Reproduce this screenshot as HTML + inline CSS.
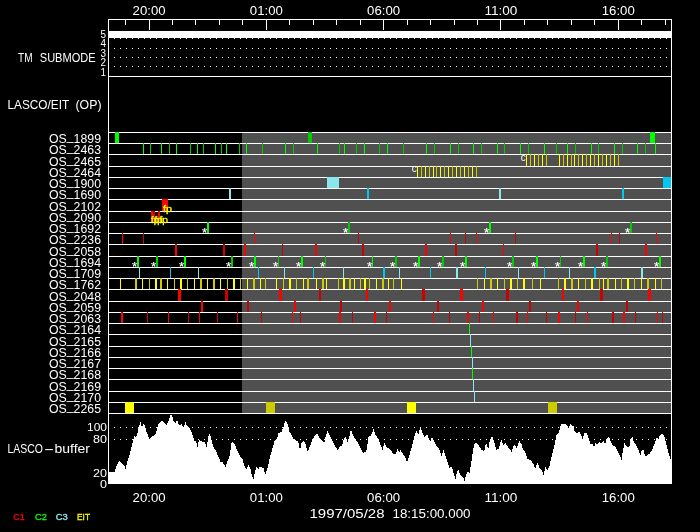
<!DOCTYPE html>
<html><head><meta charset="utf-8"><title>LASCO/EIT plan 1997/05/28</title>
<style>
html,body{margin:0;padding:0;background:#000;}
body{width:700px;height:532px;overflow:hidden;}
svg{display:block;position:absolute;left:0;top:0;}
svg.t{will-change:transform;}
text{font-family:"Liberation Sans", sans-serif;stroke-width:0px;}
</style></head><body>
<svg width="700" height="532" viewBox="0 0 700 532">
<rect x="0" y="0" width="700" height="532" fill="#000"/>
<g shape-rendering="crispEdges">
<rect x="242" y="132" width="429" height="281" fill="#505050"/>
<rect x="108" y="19" width="564" height="1" fill="#fff"/>
<rect x="108" y="19" width="1" height="465" fill="#fff"/>
<rect x="671" y="19" width="1" height="465" fill="#fff"/>
<rect x="125" y="19" width="1" height="6" fill="#fff"/>
<rect x="149" y="19" width="1" height="11" fill="#fff"/>
<rect x="172" y="19" width="1" height="6" fill="#fff"/>
<rect x="195" y="19" width="1" height="6" fill="#fff"/>
<rect x="219" y="19" width="1" height="6" fill="#fff"/>
<rect x="242" y="19" width="1" height="6" fill="#fff"/>
<rect x="266" y="19" width="1" height="11" fill="#fff"/>
<rect x="289" y="19" width="1" height="6" fill="#fff"/>
<rect x="313" y="19" width="1" height="6" fill="#fff"/>
<rect x="336" y="19" width="1" height="6" fill="#fff"/>
<rect x="360" y="19" width="1" height="6" fill="#fff"/>
<rect x="383" y="19" width="1" height="11" fill="#fff"/>
<rect x="407" y="19" width="1" height="6" fill="#fff"/>
<rect x="430" y="19" width="1" height="6" fill="#fff"/>
<rect x="454" y="19" width="1" height="6" fill="#fff"/>
<rect x="477" y="19" width="1" height="6" fill="#fff"/>
<rect x="500" y="19" width="1" height="11" fill="#fff"/>
<rect x="524" y="19" width="1" height="6" fill="#fff"/>
<rect x="547" y="19" width="1" height="6" fill="#fff"/>
<rect x="571" y="19" width="1" height="6" fill="#fff"/>
<rect x="594" y="19" width="1" height="6" fill="#fff"/>
<rect x="618" y="19" width="1" height="11" fill="#fff"/>
<rect x="641" y="19" width="1" height="6" fill="#fff"/>
<rect x="665" y="19" width="1" height="6" fill="#fff"/>
<rect x="108" y="31" width="563" height="7" fill="#fff"/>
<g fill="#fff"><rect x="114" y="38" width="1" height="1"/><rect x="120" y="38" width="1" height="1"/><rect x="126" y="38" width="1" height="1"/><rect x="132" y="38" width="1" height="1"/><rect x="138" y="38" width="1" height="1"/><rect x="144" y="38" width="1" height="1"/><rect x="150" y="38" width="1" height="1"/><rect x="156" y="38" width="1" height="1"/><rect x="162" y="38" width="1" height="1"/><rect x="168" y="38" width="1" height="1"/><rect x="174" y="38" width="1" height="1"/><rect x="180" y="38" width="1" height="1"/><rect x="186" y="38" width="1" height="1"/><rect x="192" y="38" width="1" height="1"/><rect x="198" y="38" width="1" height="1"/><rect x="204" y="38" width="1" height="1"/><rect x="210" y="38" width="1" height="1"/><rect x="216" y="38" width="1" height="1"/><rect x="222" y="38" width="1" height="1"/><rect x="228" y="38" width="1" height="1"/><rect x="234" y="38" width="1" height="1"/><rect x="240" y="38" width="1" height="1"/><rect x="246" y="38" width="1" height="1"/><rect x="252" y="38" width="1" height="1"/><rect x="258" y="38" width="1" height="1"/><rect x="264" y="38" width="1" height="1"/><rect x="270" y="38" width="1" height="1"/><rect x="276" y="38" width="1" height="1"/><rect x="282" y="38" width="1" height="1"/><rect x="288" y="38" width="1" height="1"/><rect x="294" y="38" width="1" height="1"/><rect x="300" y="38" width="1" height="1"/><rect x="306" y="38" width="1" height="1"/><rect x="312" y="38" width="1" height="1"/><rect x="318" y="38" width="1" height="1"/><rect x="324" y="38" width="1" height="1"/><rect x="330" y="38" width="1" height="1"/><rect x="336" y="38" width="1" height="1"/><rect x="342" y="38" width="1" height="1"/><rect x="348" y="38" width="1" height="1"/><rect x="354" y="38" width="1" height="1"/><rect x="360" y="38" width="1" height="1"/><rect x="366" y="38" width="1" height="1"/><rect x="372" y="38" width="1" height="1"/><rect x="378" y="38" width="1" height="1"/><rect x="384" y="38" width="1" height="1"/><rect x="390" y="38" width="1" height="1"/><rect x="396" y="38" width="1" height="1"/><rect x="402" y="38" width="1" height="1"/><rect x="408" y="38" width="1" height="1"/><rect x="414" y="38" width="1" height="1"/><rect x="420" y="38" width="1" height="1"/><rect x="426" y="38" width="1" height="1"/><rect x="432" y="38" width="1" height="1"/><rect x="438" y="38" width="1" height="1"/><rect x="444" y="38" width="1" height="1"/><rect x="450" y="38" width="1" height="1"/><rect x="456" y="38" width="1" height="1"/><rect x="462" y="38" width="1" height="1"/><rect x="468" y="38" width="1" height="1"/><rect x="474" y="38" width="1" height="1"/><rect x="480" y="38" width="1" height="1"/><rect x="486" y="38" width="1" height="1"/><rect x="492" y="38" width="1" height="1"/><rect x="498" y="38" width="1" height="1"/><rect x="504" y="38" width="1" height="1"/><rect x="510" y="38" width="1" height="1"/><rect x="516" y="38" width="1" height="1"/><rect x="522" y="38" width="1" height="1"/><rect x="528" y="38" width="1" height="1"/><rect x="534" y="38" width="1" height="1"/><rect x="540" y="38" width="1" height="1"/><rect x="546" y="38" width="1" height="1"/><rect x="552" y="38" width="1" height="1"/><rect x="558" y="38" width="1" height="1"/><rect x="564" y="38" width="1" height="1"/><rect x="570" y="38" width="1" height="1"/><rect x="576" y="38" width="1" height="1"/><rect x="582" y="38" width="1" height="1"/><rect x="588" y="38" width="1" height="1"/><rect x="594" y="38" width="1" height="1"/><rect x="600" y="38" width="1" height="1"/><rect x="606" y="38" width="1" height="1"/><rect x="612" y="38" width="1" height="1"/><rect x="618" y="38" width="1" height="1"/><rect x="624" y="38" width="1" height="1"/><rect x="630" y="38" width="1" height="1"/><rect x="636" y="38" width="1" height="1"/><rect x="642" y="38" width="1" height="1"/><rect x="648" y="38" width="1" height="1"/><rect x="654" y="38" width="1" height="1"/><rect x="660" y="38" width="1" height="1"/><rect x="666" y="38" width="1" height="1"/></g>
<g fill="#fff"><rect x="114" y="48" width="1" height="1"/><rect x="120" y="48" width="1" height="1"/><rect x="126" y="48" width="1" height="1"/><rect x="132" y="48" width="1" height="1"/><rect x="138" y="48" width="1" height="1"/><rect x="144" y="48" width="1" height="1"/><rect x="150" y="48" width="1" height="1"/><rect x="156" y="48" width="1" height="1"/><rect x="162" y="48" width="1" height="1"/><rect x="168" y="48" width="1" height="1"/><rect x="174" y="48" width="1" height="1"/><rect x="180" y="48" width="1" height="1"/><rect x="186" y="48" width="1" height="1"/><rect x="192" y="48" width="1" height="1"/><rect x="198" y="48" width="1" height="1"/><rect x="204" y="48" width="1" height="1"/><rect x="210" y="48" width="1" height="1"/><rect x="216" y="48" width="1" height="1"/><rect x="222" y="48" width="1" height="1"/><rect x="228" y="48" width="1" height="1"/><rect x="234" y="48" width="1" height="1"/><rect x="240" y="48" width="1" height="1"/><rect x="246" y="48" width="1" height="1"/><rect x="252" y="48" width="1" height="1"/><rect x="258" y="48" width="1" height="1"/><rect x="264" y="48" width="1" height="1"/><rect x="270" y="48" width="1" height="1"/><rect x="276" y="48" width="1" height="1"/><rect x="282" y="48" width="1" height="1"/><rect x="288" y="48" width="1" height="1"/><rect x="294" y="48" width="1" height="1"/><rect x="300" y="48" width="1" height="1"/><rect x="306" y="48" width="1" height="1"/><rect x="312" y="48" width="1" height="1"/><rect x="318" y="48" width="1" height="1"/><rect x="324" y="48" width="1" height="1"/><rect x="330" y="48" width="1" height="1"/><rect x="336" y="48" width="1" height="1"/><rect x="342" y="48" width="1" height="1"/><rect x="348" y="48" width="1" height="1"/><rect x="354" y="48" width="1" height="1"/><rect x="360" y="48" width="1" height="1"/><rect x="366" y="48" width="1" height="1"/><rect x="372" y="48" width="1" height="1"/><rect x="378" y="48" width="1" height="1"/><rect x="384" y="48" width="1" height="1"/><rect x="390" y="48" width="1" height="1"/><rect x="396" y="48" width="1" height="1"/><rect x="402" y="48" width="1" height="1"/><rect x="408" y="48" width="1" height="1"/><rect x="414" y="48" width="1" height="1"/><rect x="420" y="48" width="1" height="1"/><rect x="426" y="48" width="1" height="1"/><rect x="432" y="48" width="1" height="1"/><rect x="438" y="48" width="1" height="1"/><rect x="444" y="48" width="1" height="1"/><rect x="450" y="48" width="1" height="1"/><rect x="456" y="48" width="1" height="1"/><rect x="462" y="48" width="1" height="1"/><rect x="468" y="48" width="1" height="1"/><rect x="474" y="48" width="1" height="1"/><rect x="480" y="48" width="1" height="1"/><rect x="486" y="48" width="1" height="1"/><rect x="492" y="48" width="1" height="1"/><rect x="498" y="48" width="1" height="1"/><rect x="504" y="48" width="1" height="1"/><rect x="510" y="48" width="1" height="1"/><rect x="516" y="48" width="1" height="1"/><rect x="522" y="48" width="1" height="1"/><rect x="528" y="48" width="1" height="1"/><rect x="534" y="48" width="1" height="1"/><rect x="540" y="48" width="1" height="1"/><rect x="546" y="48" width="1" height="1"/><rect x="552" y="48" width="1" height="1"/><rect x="558" y="48" width="1" height="1"/><rect x="564" y="48" width="1" height="1"/><rect x="570" y="48" width="1" height="1"/><rect x="576" y="48" width="1" height="1"/><rect x="582" y="48" width="1" height="1"/><rect x="588" y="48" width="1" height="1"/><rect x="594" y="48" width="1" height="1"/><rect x="600" y="48" width="1" height="1"/><rect x="606" y="48" width="1" height="1"/><rect x="612" y="48" width="1" height="1"/><rect x="618" y="48" width="1" height="1"/><rect x="624" y="48" width="1" height="1"/><rect x="630" y="48" width="1" height="1"/><rect x="636" y="48" width="1" height="1"/><rect x="642" y="48" width="1" height="1"/><rect x="648" y="48" width="1" height="1"/><rect x="654" y="48" width="1" height="1"/><rect x="660" y="48" width="1" height="1"/><rect x="666" y="48" width="1" height="1"/></g>
<g fill="#fff"><rect x="114" y="57" width="1" height="1"/><rect x="120" y="57" width="1" height="1"/><rect x="126" y="57" width="1" height="1"/><rect x="132" y="57" width="1" height="1"/><rect x="138" y="57" width="1" height="1"/><rect x="144" y="57" width="1" height="1"/><rect x="150" y="57" width="1" height="1"/><rect x="156" y="57" width="1" height="1"/><rect x="162" y="57" width="1" height="1"/><rect x="168" y="57" width="1" height="1"/><rect x="174" y="57" width="1" height="1"/><rect x="180" y="57" width="1" height="1"/><rect x="186" y="57" width="1" height="1"/><rect x="192" y="57" width="1" height="1"/><rect x="198" y="57" width="1" height="1"/><rect x="204" y="57" width="1" height="1"/><rect x="210" y="57" width="1" height="1"/><rect x="216" y="57" width="1" height="1"/><rect x="222" y="57" width="1" height="1"/><rect x="228" y="57" width="1" height="1"/><rect x="234" y="57" width="1" height="1"/><rect x="240" y="57" width="1" height="1"/><rect x="246" y="57" width="1" height="1"/><rect x="252" y="57" width="1" height="1"/><rect x="258" y="57" width="1" height="1"/><rect x="264" y="57" width="1" height="1"/><rect x="270" y="57" width="1" height="1"/><rect x="276" y="57" width="1" height="1"/><rect x="282" y="57" width="1" height="1"/><rect x="288" y="57" width="1" height="1"/><rect x="294" y="57" width="1" height="1"/><rect x="300" y="57" width="1" height="1"/><rect x="306" y="57" width="1" height="1"/><rect x="312" y="57" width="1" height="1"/><rect x="318" y="57" width="1" height="1"/><rect x="324" y="57" width="1" height="1"/><rect x="330" y="57" width="1" height="1"/><rect x="336" y="57" width="1" height="1"/><rect x="342" y="57" width="1" height="1"/><rect x="348" y="57" width="1" height="1"/><rect x="354" y="57" width="1" height="1"/><rect x="360" y="57" width="1" height="1"/><rect x="366" y="57" width="1" height="1"/><rect x="372" y="57" width="1" height="1"/><rect x="378" y="57" width="1" height="1"/><rect x="384" y="57" width="1" height="1"/><rect x="390" y="57" width="1" height="1"/><rect x="396" y="57" width="1" height="1"/><rect x="402" y="57" width="1" height="1"/><rect x="408" y="57" width="1" height="1"/><rect x="414" y="57" width="1" height="1"/><rect x="420" y="57" width="1" height="1"/><rect x="426" y="57" width="1" height="1"/><rect x="432" y="57" width="1" height="1"/><rect x="438" y="57" width="1" height="1"/><rect x="444" y="57" width="1" height="1"/><rect x="450" y="57" width="1" height="1"/><rect x="456" y="57" width="1" height="1"/><rect x="462" y="57" width="1" height="1"/><rect x="468" y="57" width="1" height="1"/><rect x="474" y="57" width="1" height="1"/><rect x="480" y="57" width="1" height="1"/><rect x="486" y="57" width="1" height="1"/><rect x="492" y="57" width="1" height="1"/><rect x="498" y="57" width="1" height="1"/><rect x="504" y="57" width="1" height="1"/><rect x="510" y="57" width="1" height="1"/><rect x="516" y="57" width="1" height="1"/><rect x="522" y="57" width="1" height="1"/><rect x="528" y="57" width="1" height="1"/><rect x="534" y="57" width="1" height="1"/><rect x="540" y="57" width="1" height="1"/><rect x="546" y="57" width="1" height="1"/><rect x="552" y="57" width="1" height="1"/><rect x="558" y="57" width="1" height="1"/><rect x="564" y="57" width="1" height="1"/><rect x="570" y="57" width="1" height="1"/><rect x="576" y="57" width="1" height="1"/><rect x="582" y="57" width="1" height="1"/><rect x="588" y="57" width="1" height="1"/><rect x="594" y="57" width="1" height="1"/><rect x="600" y="57" width="1" height="1"/><rect x="606" y="57" width="1" height="1"/><rect x="612" y="57" width="1" height="1"/><rect x="618" y="57" width="1" height="1"/><rect x="624" y="57" width="1" height="1"/><rect x="630" y="57" width="1" height="1"/><rect x="636" y="57" width="1" height="1"/><rect x="642" y="57" width="1" height="1"/><rect x="648" y="57" width="1" height="1"/><rect x="654" y="57" width="1" height="1"/><rect x="660" y="57" width="1" height="1"/><rect x="666" y="57" width="1" height="1"/></g>
<g fill="#fff"><rect x="114" y="66" width="1" height="1"/><rect x="120" y="66" width="1" height="1"/><rect x="126" y="66" width="1" height="1"/><rect x="132" y="66" width="1" height="1"/><rect x="138" y="66" width="1" height="1"/><rect x="144" y="66" width="1" height="1"/><rect x="150" y="66" width="1" height="1"/><rect x="156" y="66" width="1" height="1"/><rect x="162" y="66" width="1" height="1"/><rect x="168" y="66" width="1" height="1"/><rect x="174" y="66" width="1" height="1"/><rect x="180" y="66" width="1" height="1"/><rect x="186" y="66" width="1" height="1"/><rect x="192" y="66" width="1" height="1"/><rect x="198" y="66" width="1" height="1"/><rect x="204" y="66" width="1" height="1"/><rect x="210" y="66" width="1" height="1"/><rect x="216" y="66" width="1" height="1"/><rect x="222" y="66" width="1" height="1"/><rect x="228" y="66" width="1" height="1"/><rect x="234" y="66" width="1" height="1"/><rect x="240" y="66" width="1" height="1"/><rect x="246" y="66" width="1" height="1"/><rect x="252" y="66" width="1" height="1"/><rect x="258" y="66" width="1" height="1"/><rect x="264" y="66" width="1" height="1"/><rect x="270" y="66" width="1" height="1"/><rect x="276" y="66" width="1" height="1"/><rect x="282" y="66" width="1" height="1"/><rect x="288" y="66" width="1" height="1"/><rect x="294" y="66" width="1" height="1"/><rect x="300" y="66" width="1" height="1"/><rect x="306" y="66" width="1" height="1"/><rect x="312" y="66" width="1" height="1"/><rect x="318" y="66" width="1" height="1"/><rect x="324" y="66" width="1" height="1"/><rect x="330" y="66" width="1" height="1"/><rect x="336" y="66" width="1" height="1"/><rect x="342" y="66" width="1" height="1"/><rect x="348" y="66" width="1" height="1"/><rect x="354" y="66" width="1" height="1"/><rect x="360" y="66" width="1" height="1"/><rect x="366" y="66" width="1" height="1"/><rect x="372" y="66" width="1" height="1"/><rect x="378" y="66" width="1" height="1"/><rect x="384" y="66" width="1" height="1"/><rect x="390" y="66" width="1" height="1"/><rect x="396" y="66" width="1" height="1"/><rect x="402" y="66" width="1" height="1"/><rect x="408" y="66" width="1" height="1"/><rect x="414" y="66" width="1" height="1"/><rect x="420" y="66" width="1" height="1"/><rect x="426" y="66" width="1" height="1"/><rect x="432" y="66" width="1" height="1"/><rect x="438" y="66" width="1" height="1"/><rect x="444" y="66" width="1" height="1"/><rect x="450" y="66" width="1" height="1"/><rect x="456" y="66" width="1" height="1"/><rect x="462" y="66" width="1" height="1"/><rect x="468" y="66" width="1" height="1"/><rect x="474" y="66" width="1" height="1"/><rect x="480" y="66" width="1" height="1"/><rect x="486" y="66" width="1" height="1"/><rect x="492" y="66" width="1" height="1"/><rect x="498" y="66" width="1" height="1"/><rect x="504" y="66" width="1" height="1"/><rect x="510" y="66" width="1" height="1"/><rect x="516" y="66" width="1" height="1"/><rect x="522" y="66" width="1" height="1"/><rect x="528" y="66" width="1" height="1"/><rect x="534" y="66" width="1" height="1"/><rect x="540" y="66" width="1" height="1"/><rect x="546" y="66" width="1" height="1"/><rect x="552" y="66" width="1" height="1"/><rect x="558" y="66" width="1" height="1"/><rect x="564" y="66" width="1" height="1"/><rect x="570" y="66" width="1" height="1"/><rect x="576" y="66" width="1" height="1"/><rect x="582" y="66" width="1" height="1"/><rect x="588" y="66" width="1" height="1"/><rect x="594" y="66" width="1" height="1"/><rect x="600" y="66" width="1" height="1"/><rect x="606" y="66" width="1" height="1"/><rect x="612" y="66" width="1" height="1"/><rect x="618" y="66" width="1" height="1"/><rect x="624" y="66" width="1" height="1"/><rect x="630" y="66" width="1" height="1"/><rect x="636" y="66" width="1" height="1"/><rect x="642" y="66" width="1" height="1"/><rect x="648" y="66" width="1" height="1"/><rect x="654" y="66" width="1" height="1"/><rect x="660" y="66" width="1" height="1"/><rect x="666" y="66" width="1" height="1"/></g>
<rect x="108" y="76" width="563" height="1" fill="#fff"/>
<rect x="108" y="132" width="563" height="1" fill="#fff"/>
<rect x="108" y="143" width="563" height="1" fill="#fff"/>
<rect x="108" y="154" width="563" height="1" fill="#fff"/>
<rect x="108" y="166" width="563" height="1" fill="#fff"/>
<rect x="108" y="177" width="563" height="1" fill="#fff"/>
<rect x="108" y="188" width="563" height="1" fill="#fff"/>
<rect x="108" y="199" width="563" height="1" fill="#fff"/>
<rect x="108" y="211" width="563" height="1" fill="#fff"/>
<rect x="108" y="222" width="563" height="1" fill="#fff"/>
<rect x="108" y="233" width="563" height="1" fill="#fff"/>
<rect x="108" y="244" width="563" height="1" fill="#fff"/>
<rect x="108" y="256" width="563" height="1" fill="#fff"/>
<rect x="108" y="267" width="563" height="1" fill="#fff"/>
<rect x="108" y="278" width="563" height="1" fill="#fff"/>
<rect x="108" y="289" width="563" height="1" fill="#fff"/>
<rect x="108" y="301" width="563" height="1" fill="#fff"/>
<rect x="108" y="312" width="563" height="1" fill="#fff"/>
<rect x="108" y="323" width="563" height="1" fill="#fff"/>
<rect x="108" y="334" width="563" height="1" fill="#fff"/>
<rect x="108" y="346" width="563" height="1" fill="#fff"/>
<rect x="108" y="357" width="563" height="1" fill="#fff"/>
<rect x="108" y="368" width="563" height="1" fill="#fff"/>
<rect x="108" y="379" width="563" height="1" fill="#fff"/>
<rect x="108" y="391" width="563" height="1" fill="#fff"/>
<rect x="108" y="402" width="563" height="1" fill="#fff"/>
<rect x="108" y="413" width="563" height="1" fill="#fff"/>
<rect x="115" y="132" width="4" height="11" fill="#00ff00"/>
<rect x="308" y="132" width="4" height="11" fill="#00cc00"/>
<rect x="650" y="132" width="5" height="11" fill="#00ff00"/>
<rect x="143" y="143" width="1" height="11" fill="#00ff00"/>
<rect x="150" y="143" width="1" height="11" fill="#00cc00"/>
<rect x="161" y="143" width="1" height="11" fill="#00ff00"/>
<rect x="169" y="143" width="1" height="11" fill="#00cc00"/>
<rect x="176" y="143" width="1" height="11" fill="#00ff00"/>
<rect x="190" y="143" width="1" height="11" fill="#00cc00"/>
<rect x="197" y="143" width="1" height="11" fill="#00ff00"/>
<rect x="203" y="143" width="1" height="11" fill="#00cc00"/>
<rect x="215" y="143" width="1" height="11" fill="#00ff00"/>
<rect x="221" y="143" width="1" height="11" fill="#00cc00"/>
<rect x="226" y="143" width="1" height="11" fill="#00ff00"/>
<rect x="239" y="143" width="1" height="11" fill="#00cc00"/>
<rect x="246" y="143" width="1" height="11" fill="#00ff00"/>
<rect x="262" y="143" width="1" height="11" fill="#00cc00"/>
<rect x="285" y="143" width="1" height="11" fill="#00ff00"/>
<rect x="293" y="143" width="1" height="11" fill="#00cc00"/>
<rect x="317" y="143" width="1" height="11" fill="#00ff00"/>
<rect x="339" y="143" width="1" height="11" fill="#00cc00"/>
<rect x="344" y="143" width="1" height="11" fill="#00ff00"/>
<rect x="356" y="143" width="1" height="11" fill="#00cc00"/>
<rect x="364" y="143" width="1" height="11" fill="#00ff00"/>
<rect x="379" y="143" width="1" height="11" fill="#00cc00"/>
<rect x="387" y="143" width="1" height="11" fill="#00ff00"/>
<rect x="403" y="143" width="1" height="11" fill="#00cc00"/>
<rect x="426" y="143" width="1" height="11" fill="#00ff00"/>
<rect x="434" y="143" width="1" height="11" fill="#00cc00"/>
<rect x="450" y="143" width="1" height="11" fill="#00ff00"/>
<rect x="458" y="143" width="1" height="11" fill="#00cc00"/>
<rect x="473" y="143" width="1" height="11" fill="#00ff00"/>
<rect x="481" y="143" width="1" height="11" fill="#00cc00"/>
<rect x="497" y="143" width="1" height="11" fill="#00ff00"/>
<rect x="504" y="143" width="1" height="11" fill="#00cc00"/>
<rect x="520" y="143" width="1" height="11" fill="#00ff00"/>
<rect x="528" y="143" width="1" height="11" fill="#00cc00"/>
<rect x="544" y="143" width="1" height="11" fill="#00ff00"/>
<rect x="556" y="143" width="1" height="11" fill="#00cc00"/>
<rect x="567" y="143" width="1" height="11" fill="#00ff00"/>
<rect x="575" y="143" width="1" height="11" fill="#00cc00"/>
<rect x="591" y="143" width="1" height="11" fill="#00ff00"/>
<rect x="598" y="143" width="1" height="11" fill="#00cc00"/>
<rect x="614" y="143" width="1" height="11" fill="#00ff00"/>
<rect x="622" y="143" width="1" height="11" fill="#00cc00"/>
<rect x="637" y="143" width="1" height="11" fill="#00ff00"/>
<rect x="645" y="143" width="1" height="11" fill="#00cc00"/>
<rect x="655" y="143" width="1" height="11" fill="#00ff00"/>
<rect x="526" y="154" width="1" height="12" fill="#ffff00"/>
<rect x="530" y="154" width="1" height="12" fill="#cccc00"/>
<rect x="534" y="154" width="1" height="12" fill="#ffff00"/>
<rect x="538" y="154" width="1" height="12" fill="#cccc00"/>
<rect x="542" y="154" width="1" height="12" fill="#ffff00"/>
<rect x="546" y="154" width="1" height="12" fill="#cccc00"/>
<rect x="559" y="154" width="1" height="12" fill="#ffff00"/>
<rect x="563" y="154" width="1" height="12" fill="#cccc00"/>
<rect x="567" y="154" width="1" height="12" fill="#ffff00"/>
<rect x="571" y="154" width="1" height="12" fill="#cccc00"/>
<rect x="574" y="154" width="1" height="12" fill="#ffff00"/>
<rect x="578" y="154" width="1" height="12" fill="#cccc00"/>
<rect x="582" y="154" width="1" height="12" fill="#ffff00"/>
<rect x="586" y="154" width="1" height="12" fill="#cccc00"/>
<rect x="590" y="154" width="1" height="12" fill="#ffff00"/>
<rect x="594" y="154" width="1" height="12" fill="#cccc00"/>
<rect x="598" y="154" width="1" height="12" fill="#ffff00"/>
<rect x="602" y="154" width="1" height="12" fill="#cccc00"/>
<rect x="606" y="154" width="1" height="12" fill="#ffff00"/>
<rect x="610" y="154" width="1" height="12" fill="#cccc00"/>
<rect x="614" y="154" width="1" height="12" fill="#ffff00"/>
<rect x="618" y="154" width="1" height="12" fill="#cccc00"/>
<rect x="417" y="166" width="1" height="11" fill="#ffff00"/>
<rect x="421" y="166" width="1" height="11" fill="#cccc00"/>
<rect x="425" y="166" width="1" height="11" fill="#ffff00"/>
<rect x="429" y="166" width="1" height="11" fill="#cccc00"/>
<rect x="433" y="166" width="1" height="11" fill="#ffff00"/>
<rect x="436" y="166" width="1" height="11" fill="#cccc00"/>
<rect x="440" y="166" width="1" height="11" fill="#ffff00"/>
<rect x="444" y="166" width="1" height="11" fill="#cccc00"/>
<rect x="448" y="166" width="1" height="11" fill="#ffff00"/>
<rect x="452" y="166" width="1" height="11" fill="#cccc00"/>
<rect x="456" y="166" width="1" height="11" fill="#ffff00"/>
<rect x="460" y="166" width="1" height="11" fill="#cccc00"/>
<rect x="464" y="166" width="1" height="11" fill="#ffff00"/>
<rect x="468" y="166" width="1" height="11" fill="#cccc00"/>
<rect x="472" y="166" width="1" height="11" fill="#ffff00"/>
<rect x="476" y="166" width="1" height="11" fill="#cccc00"/>
<rect x="327" y="177" width="12" height="11" fill="#8ce6ee"/>
<rect x="663" y="177" width="8" height="11" fill="#00c8f0"/>
<rect x="229" y="188" width="2" height="11" fill="#8ce6ee"/>
<rect x="367" y="188" width="2" height="11" fill="#00c8f0"/>
<rect x="499" y="188" width="2" height="11" fill="#8ce6ee"/>
<rect x="622" y="188" width="2" height="11" fill="#00c8f0"/>
<rect x="162" y="199" width="6" height="12" fill="#ff0000"/>
<rect x="151" y="211" width="2" height="11" fill="#ff0000"/>
<rect x="153" y="211" width="2" height="11" fill="#cc0000"/>
<rect x="158" y="211" width="2" height="11" fill="#ff0000"/>
<rect x="207" y="222" width="2" height="11" fill="#00ff00"/>
<rect x="348" y="222" width="2" height="11" fill="#00cc00"/>
<rect x="489" y="222" width="2" height="11" fill="#00ff00"/>
<rect x="630" y="222" width="2" height="11" fill="#00cc00"/>
<rect x="122" y="233" width="1" height="11" fill="#ff0000"/>
<rect x="143" y="233" width="1" height="11" fill="#cc0000"/>
<rect x="254" y="233" width="1" height="11" fill="#ff0000"/>
<rect x="358" y="233" width="1" height="11" fill="#cc0000"/>
<rect x="450" y="233" width="1" height="11" fill="#ff0000"/>
<rect x="465" y="233" width="1" height="11" fill="#cc0000"/>
<rect x="476" y="233" width="1" height="11" fill="#ff0000"/>
<rect x="515" y="233" width="1" height="11" fill="#cc0000"/>
<rect x="611" y="233" width="1" height="11" fill="#ff0000"/>
<rect x="619" y="233" width="1" height="11" fill="#cc0000"/>
<rect x="656" y="233" width="1" height="11" fill="#ff0000"/>
<rect x="175" y="244" width="2" height="12" fill="#ff0000"/>
<rect x="223" y="244" width="2" height="12" fill="#cc0000"/>
<rect x="244" y="244" width="2" height="12" fill="#ff0000"/>
<rect x="282" y="244" width="1" height="12" fill="#cc0000"/>
<rect x="315" y="244" width="2" height="12" fill="#ff0000"/>
<rect x="362" y="244" width="2" height="12" fill="#cc0000"/>
<rect x="425" y="244" width="2" height="12" fill="#ff0000"/>
<rect x="455" y="244" width="2" height="12" fill="#cc0000"/>
<rect x="503" y="244" width="1" height="12" fill="#ff0000"/>
<rect x="596" y="244" width="2" height="12" fill="#cc0000"/>
<rect x="645" y="244" width="2" height="12" fill="#ff0000"/>
<rect x="137" y="256" width="2" height="11" fill="#00ff00"/>
<rect x="156" y="256" width="2" height="11" fill="#00cc00"/>
<rect x="184" y="256" width="2" height="11" fill="#00ff00"/>
<rect x="231" y="256" width="2" height="11" fill="#00cc00"/>
<rect x="254" y="256" width="2" height="11" fill="#00ff00"/>
<rect x="278" y="256" width="1" height="11" fill="#00cc00"/>
<rect x="301" y="256" width="2" height="11" fill="#00ff00"/>
<rect x="325" y="256" width="1" height="11" fill="#00cc00"/>
<rect x="372" y="256" width="1" height="11" fill="#00ff00"/>
<rect x="395" y="256" width="2" height="11" fill="#00cc00"/>
<rect x="418" y="256" width="2" height="11" fill="#00ff00"/>
<rect x="442" y="256" width="2" height="11" fill="#00cc00"/>
<rect x="465" y="256" width="2" height="11" fill="#00ff00"/>
<rect x="512" y="256" width="2" height="11" fill="#00cc00"/>
<rect x="536" y="256" width="2" height="11" fill="#00ff00"/>
<rect x="560" y="256" width="1" height="11" fill="#00cc00"/>
<rect x="583" y="256" width="2" height="11" fill="#00ff00"/>
<rect x="606" y="256" width="2" height="11" fill="#00cc00"/>
<rect x="659" y="256" width="2" height="11" fill="#00ff00"/>
<rect x="139" y="267" width="1" height="11" fill="#8ce6ee"/>
<rect x="170" y="267" width="1" height="11" fill="#00c8f0"/>
<rect x="198" y="267" width="1" height="11" fill="#8ce6ee"/>
<rect x="258" y="267" width="1" height="11" fill="#00c8f0"/>
<rect x="284" y="267" width="1" height="11" fill="#8ce6ee"/>
<rect x="313" y="267" width="1" height="11" fill="#00c8f0"/>
<rect x="343" y="267" width="1" height="11" fill="#8ce6ee"/>
<rect x="383" y="267" width="2" height="11" fill="#00c8f0"/>
<rect x="399" y="267" width="1" height="11" fill="#8ce6ee"/>
<rect x="430" y="267" width="1" height="11" fill="#00c8f0"/>
<rect x="456" y="267" width="2" height="11" fill="#8ce6ee"/>
<rect x="485" y="267" width="1" height="11" fill="#00c8f0"/>
<rect x="518" y="267" width="1" height="11" fill="#8ce6ee"/>
<rect x="544" y="267" width="1" height="11" fill="#00c8f0"/>
<rect x="569" y="267" width="1" height="11" fill="#8ce6ee"/>
<rect x="594" y="267" width="2" height="11" fill="#00c8f0"/>
<rect x="641" y="267" width="2" height="11" fill="#8ce6ee"/>
<rect x="120" y="278" width="1" height="11" fill="#ffff00"/>
<rect x="135" y="278" width="2" height="11" fill="#cccc00"/>
<rect x="142" y="278" width="1" height="11" fill="#ffff00"/>
<rect x="149" y="278" width="1" height="11" fill="#cccc00"/>
<rect x="155" y="278" width="2" height="11" fill="#ffff00"/>
<rect x="160" y="278" width="2" height="11" fill="#cccc00"/>
<rect x="167" y="278" width="1" height="11" fill="#ffff00"/>
<rect x="174" y="278" width="1" height="11" fill="#cccc00"/>
<rect x="180" y="278" width="2" height="11" fill="#ffff00"/>
<rect x="187" y="278" width="1" height="11" fill="#cccc00"/>
<rect x="194" y="278" width="1" height="11" fill="#ffff00"/>
<rect x="200" y="278" width="2" height="11" fill="#cccc00"/>
<rect x="207" y="278" width="1" height="11" fill="#ffff00"/>
<rect x="213" y="278" width="2" height="11" fill="#cccc00"/>
<rect x="220" y="278" width="1" height="11" fill="#ffff00"/>
<rect x="227" y="278" width="1" height="11" fill="#cccc00"/>
<rect x="233" y="278" width="2" height="11" fill="#ffff00"/>
<rect x="240" y="278" width="1" height="11" fill="#cccc00"/>
<rect x="247" y="278" width="1" height="11" fill="#ffff00"/>
<rect x="253" y="278" width="2" height="11" fill="#cccc00"/>
<rect x="260" y="278" width="1" height="11" fill="#ffff00"/>
<rect x="265" y="278" width="1" height="11" fill="#cccc00"/>
<rect x="276" y="278" width="1" height="11" fill="#ffff00"/>
<rect x="283" y="278" width="1" height="11" fill="#cccc00"/>
<rect x="289" y="278" width="2" height="11" fill="#ffff00"/>
<rect x="296" y="278" width="1" height="11" fill="#cccc00"/>
<rect x="303" y="278" width="1" height="11" fill="#ffff00"/>
<rect x="307" y="278" width="2" height="11" fill="#cccc00"/>
<rect x="316" y="278" width="1" height="11" fill="#ffff00"/>
<rect x="322" y="278" width="2" height="11" fill="#cccc00"/>
<rect x="326" y="278" width="1" height="11" fill="#ffff00"/>
<rect x="338" y="278" width="1" height="11" fill="#cccc00"/>
<rect x="343" y="278" width="2" height="11" fill="#ffff00"/>
<rect x="349" y="278" width="2" height="11" fill="#cccc00"/>
<rect x="354" y="278" width="1" height="11" fill="#ffff00"/>
<rect x="360" y="278" width="1" height="11" fill="#cccc00"/>
<rect x="364" y="278" width="2" height="11" fill="#ffff00"/>
<rect x="369" y="278" width="1" height="11" fill="#cccc00"/>
<rect x="376" y="278" width="1" height="11" fill="#ffff00"/>
<rect x="382" y="278" width="2" height="11" fill="#cccc00"/>
<rect x="388" y="278" width="1" height="11" fill="#ffff00"/>
<rect x="393" y="278" width="1" height="11" fill="#cccc00"/>
<rect x="401" y="278" width="1" height="11" fill="#ffff00"/>
<rect x="477" y="278" width="1" height="11" fill="#cccc00"/>
<rect x="484" y="278" width="1" height="11" fill="#ffff00"/>
<rect x="490" y="278" width="2" height="11" fill="#cccc00"/>
<rect x="497" y="278" width="1" height="11" fill="#ffff00"/>
<rect x="504" y="278" width="1" height="11" fill="#cccc00"/>
<rect x="510" y="278" width="2" height="11" fill="#ffff00"/>
<rect x="517" y="278" width="1" height="11" fill="#cccc00"/>
<rect x="523" y="278" width="2" height="11" fill="#ffff00"/>
<rect x="532" y="278" width="1" height="11" fill="#cccc00"/>
<rect x="540" y="278" width="1" height="11" fill="#ffff00"/>
<rect x="558" y="278" width="1" height="11" fill="#cccc00"/>
<rect x="564" y="278" width="2" height="11" fill="#ffff00"/>
<rect x="571" y="278" width="2" height="11" fill="#cccc00"/>
<rect x="578" y="278" width="1" height="11" fill="#ffff00"/>
<rect x="585" y="278" width="1" height="11" fill="#cccc00"/>
<rect x="591" y="278" width="2" height="11" fill="#ffff00"/>
<rect x="599" y="278" width="1" height="11" fill="#cccc00"/>
<rect x="603" y="278" width="1" height="11" fill="#ffff00"/>
<rect x="607" y="278" width="2" height="11" fill="#cccc00"/>
<rect x="615" y="278" width="1" height="11" fill="#ffff00"/>
<rect x="621" y="278" width="1" height="11" fill="#cccc00"/>
<rect x="627" y="278" width="2" height="11" fill="#ffff00"/>
<rect x="634" y="278" width="1" height="11" fill="#cccc00"/>
<rect x="641" y="278" width="1" height="11" fill="#ffff00"/>
<rect x="647" y="278" width="2" height="11" fill="#cccc00"/>
<rect x="655" y="278" width="1" height="11" fill="#ffff00"/>
<rect x="661" y="278" width="1" height="11" fill="#cccc00"/>
<rect x="178" y="289" width="3" height="12" fill="#ff0000"/>
<rect x="225" y="289" width="3" height="12" fill="#cc0000"/>
<rect x="279" y="289" width="3" height="12" fill="#ff0000"/>
<rect x="319" y="289" width="2" height="12" fill="#cc0000"/>
<rect x="366" y="289" width="2" height="12" fill="#ff0000"/>
<rect x="422" y="289" width="3" height="12" fill="#cc0000"/>
<rect x="460" y="289" width="3" height="12" fill="#ff0000"/>
<rect x="506" y="289" width="3" height="12" fill="#cc0000"/>
<rect x="562" y="289" width="2" height="12" fill="#ff0000"/>
<rect x="600" y="289" width="3" height="12" fill="#cc0000"/>
<rect x="648" y="289" width="3" height="12" fill="#ff0000"/>
<rect x="201" y="301" width="2" height="11" fill="#ff0000"/>
<rect x="247" y="301" width="2" height="11" fill="#cc0000"/>
<rect x="294" y="301" width="2" height="11" fill="#ff0000"/>
<rect x="340" y="301" width="2" height="11" fill="#cc0000"/>
<rect x="389" y="301" width="2" height="11" fill="#ff0000"/>
<rect x="437" y="301" width="2" height="11" fill="#cc0000"/>
<rect x="482" y="301" width="2" height="11" fill="#ff0000"/>
<rect x="529" y="301" width="2" height="11" fill="#cc0000"/>
<rect x="577" y="301" width="2" height="11" fill="#ff0000"/>
<rect x="626" y="301" width="2" height="11" fill="#cc0000"/>
<rect x="121" y="312" width="2" height="11" fill="#ff0000"/>
<rect x="147" y="312" width="1" height="11" fill="#cc0000"/>
<rect x="168" y="312" width="1" height="11" fill="#ff0000"/>
<rect x="188" y="312" width="1" height="11" fill="#cc0000"/>
<rect x="199" y="312" width="1" height="11" fill="#ff0000"/>
<rect x="217" y="312" width="1" height="11" fill="#cc0000"/>
<rect x="237" y="312" width="1" height="11" fill="#ff0000"/>
<rect x="261" y="312" width="1" height="11" fill="#cc0000"/>
<rect x="292" y="312" width="1" height="11" fill="#ff0000"/>
<rect x="300" y="312" width="1" height="11" fill="#cc0000"/>
<rect x="339" y="312" width="2" height="11" fill="#ff0000"/>
<rect x="352" y="312" width="1" height="11" fill="#cc0000"/>
<rect x="374" y="312" width="2" height="11" fill="#ff0000"/>
<rect x="386" y="312" width="1" height="11" fill="#cc0000"/>
<rect x="433" y="312" width="1" height="11" fill="#ff0000"/>
<rect x="449" y="312" width="1" height="11" fill="#cc0000"/>
<rect x="467" y="312" width="2" height="11" fill="#ff0000"/>
<rect x="479" y="312" width="1" height="11" fill="#cc0000"/>
<rect x="493" y="312" width="1" height="11" fill="#ff0000"/>
<rect x="516" y="312" width="2" height="11" fill="#cc0000"/>
<rect x="527" y="312" width="1" height="11" fill="#ff0000"/>
<rect x="546" y="312" width="1" height="11" fill="#cc0000"/>
<rect x="558" y="312" width="2" height="11" fill="#ff0000"/>
<rect x="575" y="312" width="1" height="11" fill="#cc0000"/>
<rect x="587" y="312" width="1" height="11" fill="#ff0000"/>
<rect x="612" y="312" width="2" height="11" fill="#cc0000"/>
<rect x="623" y="312" width="2" height="11" fill="#ff0000"/>
<rect x="635" y="312" width="1" height="11" fill="#cc0000"/>
<rect x="657" y="312" width="1" height="11" fill="#ff0000"/>
<rect x="662" y="312" width="1" height="11" fill="#cc0000"/>
<rect x="469" y="323" width="1" height="11" fill="#00ff00"/>
<rect x="470" y="334" width="1" height="12" fill="#8ce6ee"/>
<rect x="471" y="346" width="1" height="11" fill="#00ff00"/>
<rect x="472" y="357" width="1" height="11" fill="#8ce6ee"/>
<rect x="472" y="368" width="1" height="11" fill="#00ff00"/>
<rect x="473" y="379" width="1" height="12" fill="#8ce6ee"/>
<rect x="474" y="391" width="1" height="11" fill="#8ce6ee"/>
<rect x="125" y="402" width="9" height="11" fill="#ffff00"/>
<rect x="266" y="402" width="9" height="11" fill="#cccc00"/>
<rect x="407" y="402" width="9" height="11" fill="#ffff00"/>
<rect x="548" y="402" width="9" height="11" fill="#cccc00"/>
<g fill="#fff"><rect x="114" y="427" width="1" height="1"/><rect x="120" y="427" width="1" height="1"/><rect x="126" y="427" width="1" height="1"/><rect x="132" y="427" width="1" height="1"/><rect x="138" y="427" width="1" height="1"/><rect x="144" y="427" width="1" height="1"/><rect x="150" y="427" width="1" height="1"/><rect x="156" y="427" width="1" height="1"/><rect x="162" y="427" width="1" height="1"/><rect x="168" y="427" width="1" height="1"/><rect x="174" y="427" width="1" height="1"/><rect x="180" y="427" width="1" height="1"/><rect x="186" y="427" width="1" height="1"/><rect x="192" y="427" width="1" height="1"/><rect x="198" y="427" width="1" height="1"/><rect x="204" y="427" width="1" height="1"/><rect x="210" y="427" width="1" height="1"/><rect x="216" y="427" width="1" height="1"/><rect x="222" y="427" width="1" height="1"/><rect x="228" y="427" width="1" height="1"/><rect x="234" y="427" width="1" height="1"/><rect x="240" y="427" width="1" height="1"/><rect x="246" y="427" width="1" height="1"/><rect x="252" y="427" width="1" height="1"/><rect x="258" y="427" width="1" height="1"/><rect x="264" y="427" width="1" height="1"/><rect x="270" y="427" width="1" height="1"/><rect x="276" y="427" width="1" height="1"/><rect x="282" y="427" width="1" height="1"/><rect x="288" y="427" width="1" height="1"/><rect x="294" y="427" width="1" height="1"/><rect x="300" y="427" width="1" height="1"/><rect x="306" y="427" width="1" height="1"/><rect x="312" y="427" width="1" height="1"/><rect x="318" y="427" width="1" height="1"/><rect x="324" y="427" width="1" height="1"/><rect x="330" y="427" width="1" height="1"/><rect x="336" y="427" width="1" height="1"/><rect x="342" y="427" width="1" height="1"/><rect x="348" y="427" width="1" height="1"/><rect x="354" y="427" width="1" height="1"/><rect x="360" y="427" width="1" height="1"/><rect x="366" y="427" width="1" height="1"/><rect x="372" y="427" width="1" height="1"/><rect x="378" y="427" width="1" height="1"/><rect x="384" y="427" width="1" height="1"/><rect x="390" y="427" width="1" height="1"/><rect x="396" y="427" width="1" height="1"/><rect x="402" y="427" width="1" height="1"/><rect x="408" y="427" width="1" height="1"/><rect x="414" y="427" width="1" height="1"/><rect x="420" y="427" width="1" height="1"/><rect x="426" y="427" width="1" height="1"/><rect x="432" y="427" width="1" height="1"/><rect x="438" y="427" width="1" height="1"/><rect x="444" y="427" width="1" height="1"/><rect x="450" y="427" width="1" height="1"/><rect x="456" y="427" width="1" height="1"/><rect x="462" y="427" width="1" height="1"/><rect x="468" y="427" width="1" height="1"/><rect x="474" y="427" width="1" height="1"/><rect x="480" y="427" width="1" height="1"/><rect x="486" y="427" width="1" height="1"/><rect x="492" y="427" width="1" height="1"/><rect x="498" y="427" width="1" height="1"/><rect x="504" y="427" width="1" height="1"/><rect x="510" y="427" width="1" height="1"/><rect x="516" y="427" width="1" height="1"/><rect x="522" y="427" width="1" height="1"/><rect x="528" y="427" width="1" height="1"/><rect x="534" y="427" width="1" height="1"/><rect x="540" y="427" width="1" height="1"/><rect x="546" y="427" width="1" height="1"/><rect x="552" y="427" width="1" height="1"/><rect x="558" y="427" width="1" height="1"/><rect x="564" y="427" width="1" height="1"/><rect x="570" y="427" width="1" height="1"/><rect x="576" y="427" width="1" height="1"/><rect x="582" y="427" width="1" height="1"/><rect x="588" y="427" width="1" height="1"/><rect x="594" y="427" width="1" height="1"/><rect x="600" y="427" width="1" height="1"/><rect x="606" y="427" width="1" height="1"/><rect x="612" y="427" width="1" height="1"/><rect x="618" y="427" width="1" height="1"/><rect x="624" y="427" width="1" height="1"/><rect x="630" y="427" width="1" height="1"/><rect x="636" y="427" width="1" height="1"/><rect x="642" y="427" width="1" height="1"/><rect x="648" y="427" width="1" height="1"/><rect x="654" y="427" width="1" height="1"/><rect x="660" y="427" width="1" height="1"/><rect x="666" y="427" width="1" height="1"/></g>
<g fill="#fff"><rect x="114" y="439" width="1" height="1"/><rect x="120" y="439" width="1" height="1"/><rect x="126" y="439" width="1" height="1"/><rect x="132" y="439" width="1" height="1"/><rect x="138" y="439" width="1" height="1"/><rect x="144" y="439" width="1" height="1"/><rect x="150" y="439" width="1" height="1"/><rect x="156" y="439" width="1" height="1"/><rect x="162" y="439" width="1" height="1"/><rect x="168" y="439" width="1" height="1"/><rect x="174" y="439" width="1" height="1"/><rect x="180" y="439" width="1" height="1"/><rect x="186" y="439" width="1" height="1"/><rect x="192" y="439" width="1" height="1"/><rect x="198" y="439" width="1" height="1"/><rect x="204" y="439" width="1" height="1"/><rect x="210" y="439" width="1" height="1"/><rect x="216" y="439" width="1" height="1"/><rect x="222" y="439" width="1" height="1"/><rect x="228" y="439" width="1" height="1"/><rect x="234" y="439" width="1" height="1"/><rect x="240" y="439" width="1" height="1"/><rect x="246" y="439" width="1" height="1"/><rect x="252" y="439" width="1" height="1"/><rect x="258" y="439" width="1" height="1"/><rect x="264" y="439" width="1" height="1"/><rect x="270" y="439" width="1" height="1"/><rect x="276" y="439" width="1" height="1"/><rect x="282" y="439" width="1" height="1"/><rect x="288" y="439" width="1" height="1"/><rect x="294" y="439" width="1" height="1"/><rect x="300" y="439" width="1" height="1"/><rect x="306" y="439" width="1" height="1"/><rect x="312" y="439" width="1" height="1"/><rect x="318" y="439" width="1" height="1"/><rect x="324" y="439" width="1" height="1"/><rect x="330" y="439" width="1" height="1"/><rect x="336" y="439" width="1" height="1"/><rect x="342" y="439" width="1" height="1"/><rect x="348" y="439" width="1" height="1"/><rect x="354" y="439" width="1" height="1"/><rect x="360" y="439" width="1" height="1"/><rect x="366" y="439" width="1" height="1"/><rect x="372" y="439" width="1" height="1"/><rect x="378" y="439" width="1" height="1"/><rect x="384" y="439" width="1" height="1"/><rect x="390" y="439" width="1" height="1"/><rect x="396" y="439" width="1" height="1"/><rect x="402" y="439" width="1" height="1"/><rect x="408" y="439" width="1" height="1"/><rect x="414" y="439" width="1" height="1"/><rect x="420" y="439" width="1" height="1"/><rect x="426" y="439" width="1" height="1"/><rect x="432" y="439" width="1" height="1"/><rect x="438" y="439" width="1" height="1"/><rect x="444" y="439" width="1" height="1"/><rect x="450" y="439" width="1" height="1"/><rect x="456" y="439" width="1" height="1"/><rect x="462" y="439" width="1" height="1"/><rect x="468" y="439" width="1" height="1"/><rect x="474" y="439" width="1" height="1"/><rect x="480" y="439" width="1" height="1"/><rect x="486" y="439" width="1" height="1"/><rect x="492" y="439" width="1" height="1"/><rect x="498" y="439" width="1" height="1"/><rect x="504" y="439" width="1" height="1"/><rect x="510" y="439" width="1" height="1"/><rect x="516" y="439" width="1" height="1"/><rect x="522" y="439" width="1" height="1"/><rect x="528" y="439" width="1" height="1"/><rect x="534" y="439" width="1" height="1"/><rect x="540" y="439" width="1" height="1"/><rect x="546" y="439" width="1" height="1"/><rect x="552" y="439" width="1" height="1"/><rect x="558" y="439" width="1" height="1"/><rect x="564" y="439" width="1" height="1"/><rect x="570" y="439" width="1" height="1"/><rect x="576" y="439" width="1" height="1"/><rect x="582" y="439" width="1" height="1"/><rect x="588" y="439" width="1" height="1"/><rect x="594" y="439" width="1" height="1"/><rect x="600" y="439" width="1" height="1"/><rect x="606" y="439" width="1" height="1"/><rect x="612" y="439" width="1" height="1"/><rect x="618" y="439" width="1" height="1"/><rect x="624" y="439" width="1" height="1"/><rect x="630" y="439" width="1" height="1"/><rect x="636" y="439" width="1" height="1"/><rect x="642" y="439" width="1" height="1"/><rect x="648" y="439" width="1" height="1"/><rect x="654" y="439" width="1" height="1"/><rect x="660" y="439" width="1" height="1"/><rect x="666" y="439" width="1" height="1"/></g>
<polygon fill="#fff" points="108.0,471.7 114.8,471.7 116.3,466.4 119.3,461.1 121.5,462.6 124.5,465.6 125.3,469.8 127.6,461.1 129.8,453.6 132.0,445.3 134.3,436.3 135.8,437.8 137.3,434.0 138.8,426.5 140.6,422.0 141.8,427.3 143.3,424.3 144.8,425.8 146.4,431.8 149.4,438.9 151.6,437.0 155.4,434.8 156.9,429.5 158.4,424.3 161.8,420.8 164.4,422.8 166.7,425.0 168.9,420.5 170.4,414.5 171.9,414.5 173.0,419.8 175.4,423.2 177.2,420.2 178.7,425.0 181.7,424.3 183.2,428.0 185.5,422.0 187.0,425.8 190.0,428.8 192.2,434.0 194.5,440.8 196.0,440.8 197.4,448.0 198.9,440.0 201.2,441.1 204.8,442.3 206.7,447.6 208.2,437.1 209.6,434.1 210.8,437.1 212.3,443.8 213.8,448.3 216.0,450.6 218.3,456.6 220.6,461.9 222.8,462.6 225.5,466.8 227.3,461.9 229.3,457.4 230.8,447.6 231.8,441.3 234.8,443.8 237.1,450.6 239.4,455.1 242.4,458.9 243.9,464.9 246.1,469.4 248.4,464.9 250.6,469.4 251.4,473.2 253.3,479.9 254.8,472.4 256.7,466.4 258.2,469.4 259.7,467.1 263.4,467.9 265.4,474.7 267.9,466.4 270.2,456.6 272.4,448.3 274.7,440.8 277.0,438.9 278.5,433.3 281.5,431.8 283.7,426.5 285.2,420.5 287.4,423.2 289.4,431.4 291.9,435.6 293.4,439.3 295.5,440.1 298.2,441.6 300.0,449.8 301.8,442.3 303.8,440.8 305.3,443.1 307.6,451.8 309.8,446.8 312.1,440.8 314.3,436.3 317.3,433.3 319.6,437.8 324.4,442.8 325.6,436.3 327.6,431.0 330.1,436.3 333.1,442.3 336.1,447.6 337.9,450.9 339.9,446.1 342.1,446.1 343.6,439.3 345.9,436.3 347.4,442.8 348.9,438.6 350.9,429.2 352.7,434.8 355.7,439.3 359.4,445.3 362.9,452.9 366.2,451.4 367.4,445.3 368.5,437.1 370.7,435.6 372.2,432.6 373.4,429.2 375.2,434.1 377.6,437.8 379.8,443.0 382.6,449.8 384.3,443.0 386.3,446.8 390.0,449.1 393.8,454.8 396.1,453.6 397.6,449.1 399.1,452.9 400.3,449.8 402.8,453.6 405.1,456.6 407.0,462.9 408.8,457.4 411.1,449.1 413.3,440.8 415.6,432.6 416.4,431.0 418.3,434.8 420.4,427.3 422.4,432.6 424.3,436.8 427.3,434.1 429.4,440.1 430.9,440.8 431.8,437.1 434.4,441.6 436.7,446.1 439.7,449.8 441.6,456.6 443.4,449.8 445.7,456.6 447.9,462.6 449.4,467.9 451.7,466.4 453.2,471.7 455.8,479.9 456.7,472.4 458.5,470.2 460.7,475.4 463.0,476.9 464.5,480.7 466.7,473.2 468.2,470.9 469.3,473.9 471.1,464.1 472.6,453.6 474.1,444.6 475.1,442.3 478.5,444.6 481.2,449.8 484.2,450.9 486.1,442.8 488.3,449.1 489.8,440.1 492.1,435.9 494.3,442.3 496.6,450.3 498.8,448.3 501.1,439.3 503.8,446.1 504.9,442.3 507.9,446.8 511.6,451.8 513.9,444.3 516.9,448.3 519.1,440.8 521.4,443.8 522.9,449.4 525.2,452.1 527.4,458.9 531.2,460.4 533.4,464.1 535.4,468.9 537.2,461.9 539.4,467.9 541.7,470.2 543.5,475.0 545.5,467.1 547.7,470.2 549.2,467.1 550.7,460.4 553.0,451.4 555.1,442.3 556.6,434.1 558.9,432.6 561.1,423.5 563.4,424.5 565.1,423.0 568.5,427.7 570.3,424.3 573.8,426.5 574.5,431.0 577.3,433.3 579.1,431.4 580.9,434.1 582.4,438.9 584.3,433.3 586.6,433.3 588.8,438.6 590.3,443.8 592.6,444.3 594.4,446.8 595.6,442.3 597.1,444.6 599.4,442.3 601.6,443.1 603.4,441.3 605.4,443.8 606.1,440.1 608.8,436.3 610.6,440.8 612.9,446.1 615.2,446.1 617.4,450.6 619.7,455.1 621.5,459.6 623.0,449.8 624.5,443.1 627.2,447.6 629.4,446.8 630.6,439.3 632.4,437.1 633.9,442.3 636.2,445.3 638.5,449.8 640.4,455.9 641.5,450.6 643.4,449.1 645.2,456.6 647.5,455.1 649.7,453.6 652.0,449.8 653.8,445.7 655.6,440.8 656.4,437.8 658.6,438.6 660.2,434.8 662.4,433.8 664.4,436.3 666.2,443.8 668.4,452.1 670.4,459.6 671.0,458.0 671,484 108,484"/>
</g>
</svg>
<svg class="t" width="700" height="532" viewBox="0 0 700 532">
<text x="132.552" y="14.5" font-size="12" text-anchor="start" fill="#fff" stroke="#fff" textLength="33" lengthAdjust="spacingAndGlyphs">20:00</text>
<text x="132.552" y="502" font-size="12" text-anchor="start" fill="#fff" stroke="#fff" textLength="33" lengthAdjust="spacingAndGlyphs">20:00</text>
<text x="249.844" y="14.5" font-size="12" text-anchor="start" fill="#fff" stroke="#fff" textLength="33" lengthAdjust="spacingAndGlyphs">01:00</text>
<text x="249.844" y="502" font-size="12" text-anchor="start" fill="#fff" stroke="#fff" textLength="33" lengthAdjust="spacingAndGlyphs">01:00</text>
<text x="367.135" y="14.5" font-size="12" text-anchor="start" fill="#fff" stroke="#fff" textLength="33" lengthAdjust="spacingAndGlyphs">06:00</text>
<text x="367.135" y="502" font-size="12" text-anchor="start" fill="#fff" stroke="#fff" textLength="33" lengthAdjust="spacingAndGlyphs">06:00</text>
<text x="484.427" y="14.5" font-size="12" text-anchor="start" fill="#fff" stroke="#fff" textLength="33" lengthAdjust="spacingAndGlyphs">11:00</text>
<text x="484.427" y="502" font-size="12" text-anchor="start" fill="#fff" stroke="#fff" textLength="33" lengthAdjust="spacingAndGlyphs">11:00</text>
<text x="601.719" y="14.5" font-size="12" text-anchor="start" fill="#fff" stroke="#fff" textLength="33" lengthAdjust="spacingAndGlyphs">16:00</text>
<text x="601.719" y="502" font-size="12" text-anchor="start" fill="#fff" stroke="#fff" textLength="33" lengthAdjust="spacingAndGlyphs">16:00</text>
<text y="518" font-size="12" fill="#fff"><tspan x="309.5" textLength="75" lengthAdjust="spacingAndGlyphs">1997/05/28</tspan> <tspan x="392.5" textLength="78" lengthAdjust="spacingAndGlyphs">18:15:00.000</tspan></text>
<text x="100.5" y="75.5" font-size="11" text-anchor="start" fill="#fff" stroke="#fff" textLength="5.5" lengthAdjust="spacingAndGlyphs">1</text>
<text x="100.5" y="66" font-size="11" text-anchor="start" fill="#fff" stroke="#fff" textLength="5.5" lengthAdjust="spacingAndGlyphs">2</text>
<text x="100.5" y="56.5" font-size="11" text-anchor="start" fill="#fff" stroke="#fff" textLength="5.5" lengthAdjust="spacingAndGlyphs">3</text>
<text x="100.5" y="47" font-size="11" text-anchor="start" fill="#fff" stroke="#fff" textLength="5.5" lengthAdjust="spacingAndGlyphs">4</text>
<text x="100.5" y="37.5" font-size="11" text-anchor="start" fill="#fff" stroke="#fff" textLength="5.5" lengthAdjust="spacingAndGlyphs">5</text>
<text y="62" font-size="12" fill="#fff"><tspan x="18" textLength="14.5" lengthAdjust="spacingAndGlyphs">TM</tspan> <tspan x="39.8" textLength="55.8" lengthAdjust="spacingAndGlyphs">SUBMODE</tspan></text>
<text y="109" font-size="12" fill="#fff"><tspan x="7.5" textLength="61.5" lengthAdjust="spacingAndGlyphs">LASCO/EIT</tspan> <tspan x="75.5" textLength="26" lengthAdjust="spacingAndGlyphs">(OP)</tspan></text>
<text x="49" y="142.5" font-size="12" text-anchor="start" fill="#fff" stroke="#fff" textLength="52" lengthAdjust="spacingAndGlyphs">OS<tspan dy="-2.6">_</tspan><tspan dy="2.6">1899</tspan></text>
<text x="49" y="153.5" font-size="12" text-anchor="start" fill="#fff" stroke="#fff" textLength="52" lengthAdjust="spacingAndGlyphs">OS<tspan dy="-2.6">_</tspan><tspan dy="2.6">2463</tspan></text>
<text x="49" y="165.5" font-size="12" text-anchor="start" fill="#fff" stroke="#fff" textLength="52" lengthAdjust="spacingAndGlyphs">OS<tspan dy="-2.6">_</tspan><tspan dy="2.6">2465</tspan></text>
<text x="49" y="176.5" font-size="12" text-anchor="start" fill="#fff" stroke="#fff" textLength="52" lengthAdjust="spacingAndGlyphs">OS<tspan dy="-2.6">_</tspan><tspan dy="2.6">2464</tspan></text>
<text x="49" y="187.5" font-size="12" text-anchor="start" fill="#fff" stroke="#fff" textLength="52" lengthAdjust="spacingAndGlyphs">OS<tspan dy="-2.6">_</tspan><tspan dy="2.6">1900</tspan></text>
<text x="49" y="198.5" font-size="12" text-anchor="start" fill="#fff" stroke="#fff" textLength="52" lengthAdjust="spacingAndGlyphs">OS<tspan dy="-2.6">_</tspan><tspan dy="2.6">1690</tspan></text>
<text x="49" y="210.5" font-size="12" text-anchor="start" fill="#fff" stroke="#fff" textLength="52" lengthAdjust="spacingAndGlyphs">OS<tspan dy="-2.6">_</tspan><tspan dy="2.6">2102</tspan></text>
<text x="49" y="221.5" font-size="12" text-anchor="start" fill="#fff" stroke="#fff" textLength="52" lengthAdjust="spacingAndGlyphs">OS<tspan dy="-2.6">_</tspan><tspan dy="2.6">2090</tspan></text>
<text x="49" y="232.5" font-size="12" text-anchor="start" fill="#fff" stroke="#fff" textLength="52" lengthAdjust="spacingAndGlyphs">OS<tspan dy="-2.6">_</tspan><tspan dy="2.6">1692</tspan></text>
<text x="49" y="243.5" font-size="12" text-anchor="start" fill="#fff" stroke="#fff" textLength="52" lengthAdjust="spacingAndGlyphs">OS<tspan dy="-2.6">_</tspan><tspan dy="2.6">2236</tspan></text>
<text x="49" y="255.5" font-size="12" text-anchor="start" fill="#fff" stroke="#fff" textLength="52" lengthAdjust="spacingAndGlyphs">OS<tspan dy="-2.6">_</tspan><tspan dy="2.6">2058</tspan></text>
<text x="49" y="266.5" font-size="12" text-anchor="start" fill="#fff" stroke="#fff" textLength="52" lengthAdjust="spacingAndGlyphs">OS<tspan dy="-2.6">_</tspan><tspan dy="2.6">1694</tspan></text>
<text x="49" y="277.5" font-size="12" text-anchor="start" fill="#fff" stroke="#fff" textLength="52" lengthAdjust="spacingAndGlyphs">OS<tspan dy="-2.6">_</tspan><tspan dy="2.6">1709</tspan></text>
<text x="49" y="288.5" font-size="12" text-anchor="start" fill="#fff" stroke="#fff" textLength="52" lengthAdjust="spacingAndGlyphs">OS<tspan dy="-2.6">_</tspan><tspan dy="2.6">1762</tspan></text>
<text x="49" y="300.5" font-size="12" text-anchor="start" fill="#fff" stroke="#fff" textLength="52" lengthAdjust="spacingAndGlyphs">OS<tspan dy="-2.6">_</tspan><tspan dy="2.6">2048</tspan></text>
<text x="49" y="311.5" font-size="12" text-anchor="start" fill="#fff" stroke="#fff" textLength="52" lengthAdjust="spacingAndGlyphs">OS<tspan dy="-2.6">_</tspan><tspan dy="2.6">2059</tspan></text>
<text x="49" y="322.5" font-size="12" text-anchor="start" fill="#fff" stroke="#fff" textLength="52" lengthAdjust="spacingAndGlyphs">OS<tspan dy="-2.6">_</tspan><tspan dy="2.6">2063</tspan></text>
<text x="49" y="333.5" font-size="12" text-anchor="start" fill="#fff" stroke="#fff" textLength="52" lengthAdjust="spacingAndGlyphs">OS<tspan dy="-2.6">_</tspan><tspan dy="2.6">2164</tspan></text>
<text x="49" y="345.5" font-size="12" text-anchor="start" fill="#fff" stroke="#fff" textLength="52" lengthAdjust="spacingAndGlyphs">OS<tspan dy="-2.6">_</tspan><tspan dy="2.6">2165</tspan></text>
<text x="49" y="356.5" font-size="12" text-anchor="start" fill="#fff" stroke="#fff" textLength="52" lengthAdjust="spacingAndGlyphs">OS<tspan dy="-2.6">_</tspan><tspan dy="2.6">2166</tspan></text>
<text x="49" y="367.5" font-size="12" text-anchor="start" fill="#fff" stroke="#fff" textLength="52" lengthAdjust="spacingAndGlyphs">OS<tspan dy="-2.6">_</tspan><tspan dy="2.6">2167</tspan></text>
<text x="49" y="378.5" font-size="12" text-anchor="start" fill="#fff" stroke="#fff" textLength="52" lengthAdjust="spacingAndGlyphs">OS<tspan dy="-2.6">_</tspan><tspan dy="2.6">2168</tspan></text>
<text x="49" y="390.5" font-size="12" text-anchor="start" fill="#fff" stroke="#fff" textLength="52" lengthAdjust="spacingAndGlyphs">OS<tspan dy="-2.6">_</tspan><tspan dy="2.6">2169</tspan></text>
<text x="49" y="401.5" font-size="12" text-anchor="start" fill="#fff" stroke="#fff" textLength="52" lengthAdjust="spacingAndGlyphs">OS<tspan dy="-2.6">_</tspan><tspan dy="2.6">2170</tspan></text>
<text x="49" y="412.5" font-size="12" text-anchor="start" fill="#fff" stroke="#fff" textLength="52" lengthAdjust="spacingAndGlyphs">OS<tspan dy="-2.6">_</tspan><tspan dy="2.6">2265</tspan></text>
<text x="87" y="431" font-size="11" text-anchor="start" fill="#fff" stroke="#fff" textLength="20" lengthAdjust="spacingAndGlyphs">100</text>
<text x="93" y="443" font-size="11" text-anchor="start" fill="#fff" stroke="#fff" textLength="14" lengthAdjust="spacingAndGlyphs">80</text>
<text x="93" y="476.5" font-size="11" text-anchor="start" fill="#fff" stroke="#fff" textLength="14" lengthAdjust="spacingAndGlyphs">20</text>
<text x="100" y="487.5" font-size="11" text-anchor="start" fill="#fff" stroke="#fff" textLength="7" lengthAdjust="spacingAndGlyphs">0</text>
<text y="453" font-size="12" fill="#fff"><tspan x="7.5" textLength="35.5" lengthAdjust="spacingAndGlyphs">LASCO</tspan><tspan x="43.7" textLength="10.6" lengthAdjust="spacingAndGlyphs">-</tspan><tspan x="54.5" textLength="35.5" lengthAdjust="spacingAndGlyphs">buffer</tspan></text>
<text x="13.3" y="520" font-size="9.6" text-anchor="start" fill="#ff0000" stroke="#ff0000" textLength="11.5" lengthAdjust="spacingAndGlyphs" style="stroke-width:0.3px">C1</text>
<text x="35" y="520" font-size="9.6" text-anchor="start" fill="#00ff00" stroke="#00ff00" textLength="12" lengthAdjust="spacingAndGlyphs" style="stroke-width:0.3px">C2</text>
<text x="55.7" y="520" font-size="9.6" text-anchor="start" fill="#8ce6ee" stroke="#8ce6ee" textLength="12" lengthAdjust="spacingAndGlyphs" style="stroke-width:0.3px">C3</text>
<text x="77" y="520" font-size="9.6" text-anchor="start" fill="#ffff00" stroke="#ffff00" textLength="13" lengthAdjust="spacingAndGlyphs" style="stroke-width:0.3px">EIT</text>
<text x="202" y="237" font-size="13.5" text-anchor="start" fill="#fff" stroke="#fff" style="stroke-width:0.15px">*</text>
<text x="343" y="237" font-size="13.5" text-anchor="start" fill="#fff" stroke="#fff" style="stroke-width:0.15px">*</text>
<text x="484" y="237" font-size="13.5" text-anchor="start" fill="#fff" stroke="#fff" style="stroke-width:0.15px">*</text>
<text x="625" y="237" font-size="13.5" text-anchor="start" fill="#fff" stroke="#fff" style="stroke-width:0.15px">*</text>
<text x="132" y="271" font-size="13.5" text-anchor="start" fill="#fff" stroke="#fff" style="stroke-width:0.15px">*</text>
<text x="151" y="271" font-size="13.5" text-anchor="start" fill="#fff" stroke="#fff" style="stroke-width:0.15px">*</text>
<text x="179" y="271" font-size="13.5" text-anchor="start" fill="#fff" stroke="#fff" style="stroke-width:0.15px">*</text>
<text x="226" y="271" font-size="13.5" text-anchor="start" fill="#fff" stroke="#fff" style="stroke-width:0.15px">*</text>
<text x="249" y="271" font-size="13.5" text-anchor="start" fill="#fff" stroke="#fff" style="stroke-width:0.15px">*</text>
<text x="273" y="271" font-size="13.5" text-anchor="start" fill="#fff" stroke="#fff" style="stroke-width:0.15px">*</text>
<text x="296" y="271" font-size="13.5" text-anchor="start" fill="#fff" stroke="#fff" style="stroke-width:0.15px">*</text>
<text x="320" y="271" font-size="13.5" text-anchor="start" fill="#fff" stroke="#fff" style="stroke-width:0.15px">*</text>
<text x="367" y="271" font-size="13.5" text-anchor="start" fill="#fff" stroke="#fff" style="stroke-width:0.15px">*</text>
<text x="390" y="271" font-size="13.5" text-anchor="start" fill="#fff" stroke="#fff" style="stroke-width:0.15px">*</text>
<text x="413" y="271" font-size="13.5" text-anchor="start" fill="#fff" stroke="#fff" style="stroke-width:0.15px">*</text>
<text x="437" y="271" font-size="13.5" text-anchor="start" fill="#fff" stroke="#fff" style="stroke-width:0.15px">*</text>
<text x="460" y="271" font-size="13.5" text-anchor="start" fill="#fff" stroke="#fff" style="stroke-width:0.15px">*</text>
<text x="507" y="271" font-size="13.5" text-anchor="start" fill="#fff" stroke="#fff" style="stroke-width:0.15px">*</text>
<text x="531" y="271" font-size="13.5" text-anchor="start" fill="#fff" stroke="#fff" style="stroke-width:0.15px">*</text>
<text x="555" y="271" font-size="13.5" text-anchor="start" fill="#fff" stroke="#fff" style="stroke-width:0.15px">*</text>
<text x="578" y="271" font-size="13.5" text-anchor="start" fill="#fff" stroke="#fff" style="stroke-width:0.15px">*</text>
<text x="601" y="271" font-size="13.5" text-anchor="start" fill="#fff" stroke="#fff" style="stroke-width:0.15px">*</text>
<text x="654" y="271" font-size="13.5" text-anchor="start" fill="#fff" stroke="#fff" style="stroke-width:0.15px">*</text>
<text x="411.8" y="172" font-size="10" text-anchor="start" fill="#fff" stroke="#fff">c</text>
<text x="520.8" y="161" font-size="10" text-anchor="start" fill="#fff" stroke="#fff">c</text>
<text x="163" y="211.5" font-size="9" text-anchor="start" fill="#ffff00" stroke="#ffff00" textLength="9" lengthAdjust="spacingAndGlyphs" style="stroke-width:0.3px">fp</text>
<text x="151" y="222.5" font-size="9" text-anchor="start" fill="#ffff00" stroke="#ffff00" textLength="8" lengthAdjust="spacingAndGlyphs" style="stroke-width:0.3px">fp</text>
<text x="154.5" y="222.5" font-size="9" text-anchor="start" fill="#ffff00" stroke="#ffff00" textLength="8" lengthAdjust="spacingAndGlyphs" style="stroke-width:0.3px">fp</text>
<text x="159.5" y="222.5" font-size="9" text-anchor="start" fill="#ffff00" stroke="#ffff00" textLength="8.5" lengthAdjust="spacingAndGlyphs" style="stroke-width:0.3px">fp</text>
</svg>
</body></html>
